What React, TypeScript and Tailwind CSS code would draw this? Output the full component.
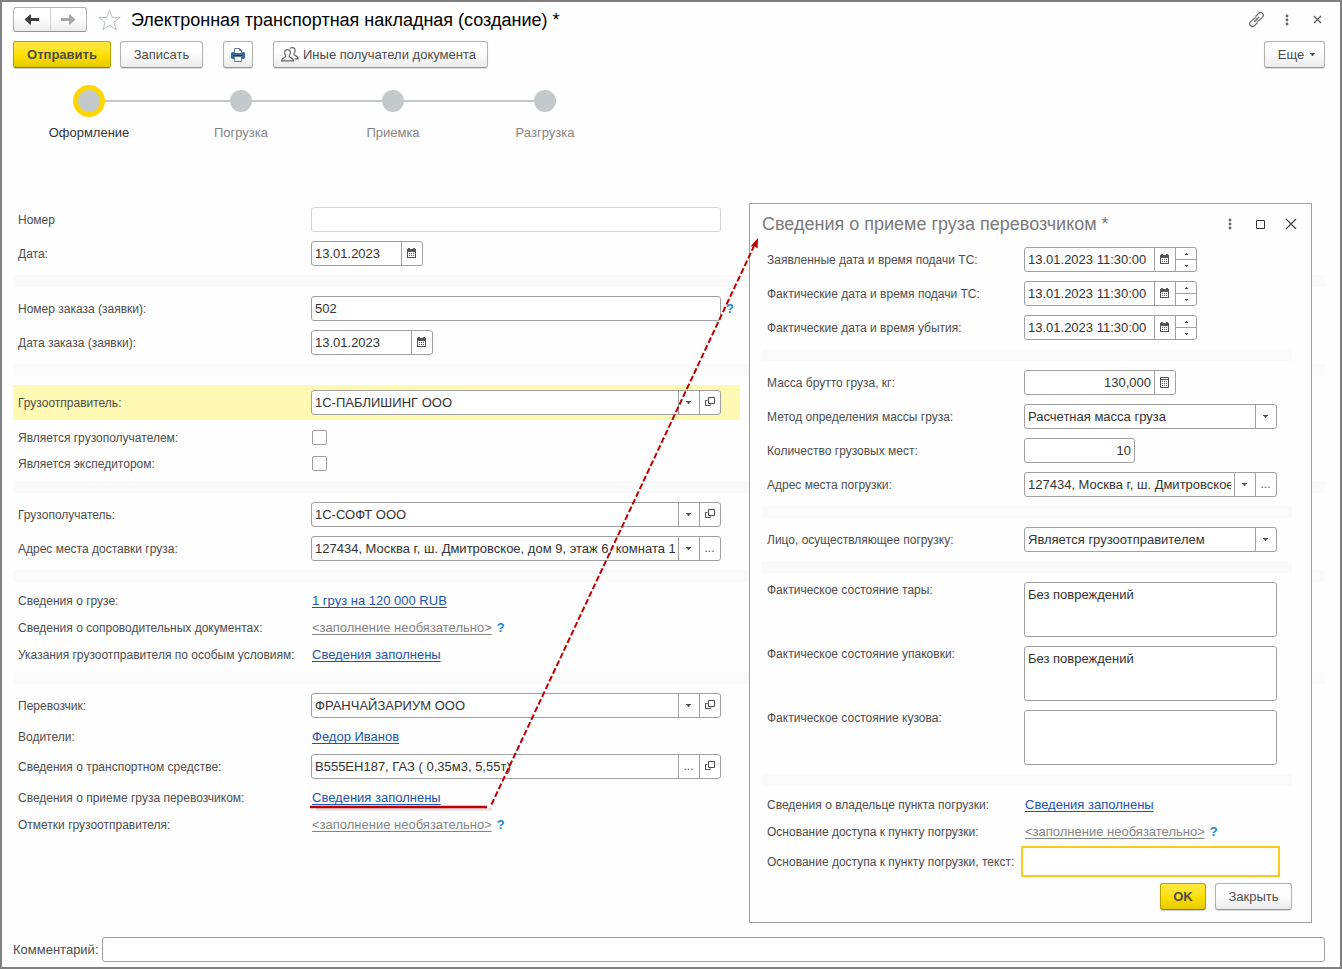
import { useId, type ReactNode } from "react";

const bandClass = "h-3 bg-[#fafafa]";
const buttonClass =
  "flex h-[27px] items-center justify-center rounded-[3px] border border-[#b0b0b0] border-b-[#949494] bg-linear-to-b from-white from-40% to-[#ebebeb] text-[13px] text-[#4d4d4d] shadow-[0_1px_1px_rgba(0,0,0,0.15)]";
const primaryClass =
  "flex h-[27px] items-center justify-center rounded-[3px] border border-[#b3a200] border-b-[#8f8200] bg-linear-to-b from-[#ffe840] via-[#ffe000] to-[#e6cb00] text-[13px] font-bold text-[#4d4d4d] shadow-[0_1px_1px_rgba(0,0,0,0.2)]";

const steps = ["Оформление", "Погрузка", "Приемка", "Разгрузка"];

type Icon = "calendar" | "calc" | "down" | "open" | "dots";

const iconTitles: Record<Icon, string> = {
  calendar: "Выбрать дату",
  calc: "Калькулятор",
  down: "Выбрать из списка",
  open: "Открыть",
  dots: "Выбрать",
};

function FieldIcon({ icon }: { icon: Icon }) {
  if (icon === "dots") return <span className="text-xs leading-4">...</span>;
  if (icon === "down") {
    return (
      <svg width="5" height="3" viewBox="0 0 5 3" aria-hidden="true">
        <path d="M0 0h5v1H4L3 3H2L1 1H0z" fill="#4d4d4d" />
      </svg>
    );
  }
  if (icon === "open") {
    return (
      <svg width="10" height="10" viewBox="0 0 10 10" fill="none" stroke="#4d4d4d" aria-hidden="true">
        <path d="M3.5.5h6v6h-6zM2.5 3.5h-2v5h5v-1" />
      </svg>
    );
  }
  if (icon === "calc") {
    return (
      <svg width="9" height="11" viewBox="0 0 9 11" aria-hidden="true">
        <path d="M.5.5h8v10h-8zM1 2.5h7" fill="none" stroke="#4d4d4d" />
        <path d="M2 4h1v1H2zM4 4h1v1H4zM6 4h1v1H6zM2 6h1v1H2zM4 6h1v1H4zM6 6h1v1H6zM2 8h1v1H2zM4 8h1v1H4zM6 8h1v1H6z" fill="#4d4d4d" />
      </svg>
    );
  }
  return (
    <svg width="9" height="10" viewBox="0 0 9 10" shapeRendering="crispEdges" aria-hidden="true">
      <path d="M1 0h2v1h3V0h2v1h1v9H0V1h1z" fill="#555" />
      <path d="M1 4h7v5H1z" fill="#fff" />
      <path d="M2 5h1v1H2zM4 5h1v1H4zM6 5h1v1H6zM2 7h1v1H2zM4 7h1v1H4zM6 7h1v1H6z" fill="#555" />
    </svg>
  );
}

function Row({ label, id, dialog, children }: { label: string; id?: string; dialog?: boolean; children: ReactNode }) {
  return (
    <div className="flex items-center">
      <label htmlFor={id} className={`shrink-0 pl-[5px] whitespace-nowrap text-[#4d4d4d] ${dialog ? "w-[262px]" : "w-[298px]"}`}>
        {label}
      </label>
      {children}
    </div>
  );
}

type FieldProps = {
  label: string;
  value: string;
  width: string;
  icons?: Icon[];
  dialog?: boolean;
  spinner?: boolean;
  align?: string;
  help?: boolean;
  readOnly?: boolean;
};

function Field({ label, value, width, icons = [], dialog, spinner, align = "", help, readOnly }: FieldProps) {
  const id = useId();
  return (
    <Row label={label} id={id} dialog={dialog}>
      <div className={`flex h-[25px] overflow-hidden rounded-[3px] border bg-white ${readOnly ? "border-[#d5d5d5]" : "border-[#a0a0a0]"} ${width}`}>
        <input id={id} defaultValue={value} readOnly={readOnly} className={`min-w-0 flex-1 px-[3px] text-[13px] text-[#333] outline-none ${align}`} />
        {icons.map((icon) => (
          <button key={icon} type="button" aria-label={iconTitles[icon]} className="flex w-[21px] shrink-0 items-center justify-center border-l border-[#a0a0a0] pr-px pb-px text-[#4d4d4d]">
            <FieldIcon icon={icon} />
          </button>
        ))}
        {spinner && (
          <div className="flex w-[21px] shrink-0 flex-col border-l border-[#a0a0a0]">
            <button type="button" aria-label="Увеличить" className="flex flex-1 items-center justify-center border-b border-[#a0a0a0]">
              <svg width="3" height="2" viewBox="0 0 3 2" aria-hidden="true"><path d="M1 0h1v1h1v1H0V1h1z" fill="#4d4d4d" /></svg>
            </button>
            <button type="button" aria-label="Уменьшить" className="flex flex-1 items-center justify-center">
              <svg width="3" height="2" viewBox="0 0 3 2" aria-hidden="true"><path d="M0 0h3v1H2v1H1V1H0z" fill="#4d4d4d" /></svg>
            </button>
          </div>
        )}
      </div>
      {help && <Help />}
    </Row>
  );
}

function SelectField({ label, value }: { label: string; value: string }) {
  const id = useId();
  return (
    <Row label={label} id={id} dialog>
      <div className="grid h-[25px] w-[253px] grid-cols-[1fr_21px] overflow-hidden rounded-[3px] border border-[#a0a0a0] bg-white">
        <select id={id} className="col-span-2 col-start-1 row-start-1 appearance-none px-[3px] text-[13px] text-[#333] outline-none">
          <option>{value}</option>
        </select>
        <span className="pointer-events-none col-start-2 row-start-1 flex items-center justify-center border-l border-[#a0a0a0] pr-px pb-px">
          <FieldIcon icon="down" />
        </span>
      </div>
    </Row>
  );
}

function AreaField({ label, value }: { label: string; value: string }) {
  const id = useId();
  return (
    <div className="flex items-start">
      <label htmlFor={id} className="w-[262px] shrink-0 pl-[5px] leading-4 text-[#4d4d4d]">{label}</label>
      <textarea id={id} defaultValue={value} className="h-[55px] w-[253px] resize-none rounded-[3px] border border-[#a0a0a0] bg-white px-[3px] py-1 text-[13px] leading-4 text-[#333] outline-none" />
    </div>
  );
}

function CheckField({ label }: { label: string }) {
  const id = useId();
  return (
    <Row label={label} id={id}>
      <div className="flex h-[17px] items-center pl-px">
        <input id={id} type="checkbox" className="size-[15px] appearance-none rounded-[2px] border border-[#a0a0a0] bg-white" />
      </div>
    </Row>
  );
}

function LinkField({ label, text, dialog, optional }: { label: string; text?: string; dialog?: boolean; optional?: boolean }) {
  return (
    <div className="flex h-[18px] items-center pt-0.5">
      <span className={`shrink-0 pl-[5px] whitespace-nowrap text-[#4d4d4d] ${dialog ? "w-[263px]" : "w-[299px]"}`}>{label}</span>
      <a href="#" className={`text-[13px] underline underline-offset-2 ${optional ? "text-[#858585]" : "text-[#1a55b0]"}`}>
        {optional ? "<заполнение необязательно>" : text}
      </a>
      {optional && <Help />}
    </div>
  );
}

function Help() {
  return <button type="button" aria-label="Справка" className="ml-[5px] text-[13px] leading-4 font-bold text-[#1b87cc]">?</button>;
}

function KebabIcon() {
  return (
    <svg width="4" height="12" viewBox="0 0 4 12" fill="#666" aria-hidden="true">
      <circle cx="2" cy="2" r="1.4" />
      <circle cx="2" cy="6" r="1.4" />
      <circle cx="2" cy="10" r="1.4" />
    </svg>
  );
}

function Header() {
  return (
    <header>
      <div className="flex h-[25px] items-center">
        <div className="flex h-[25px] w-[74px] rounded-[3px] border border-[#b0b0b0] border-b-[#949494] bg-linear-to-b from-white from-40% to-[#ebebeb]">
          <button type="button" aria-label="Назад" className="flex flex-1 items-center justify-center border-r border-[#d0d0d0]">
            <svg width="14" height="11" viewBox="0 0 14 11" fill="#404040" aria-hidden="true"><path d="M14 4v3H6v3.500H5L0 6V5L5 .5h1V4z" /></svg>
          </button>
          <button type="button" aria-label="Вперед" className="flex flex-1 items-center justify-center">
            <svg width="14" height="11" viewBox="0 0 14 11" fill="#a8a8a8" aria-hidden="true"><path d="M0 4v3h8v3.500h1L14 6V5L9 .5H8V4z" /></svg>
          </button>
        </div>
        <button type="button" aria-label="В избранное" className="ml-[11px]">
          <svg width="23" height="22" viewBox="0 0 23 22" fill="#fff" stroke="#b5bcc4" aria-hidden="true">
            <path d="m11.5 1 2.7 7.3 8 .2-6.3 4.8 2.3 7.5-6.7-4.5-6.7 4.5 2.3-7.5L.8 8.5l8-.2z" />
          </svg>
        </button>
        <h1 className="ml-[10px] text-lg leading-6 text-black">Электронная транспортная накладная (создание) *</h1>
        <div className="ml-auto flex items-center">
          <button type="button" aria-label="Получить ссылку">
            <svg width="17" height="17" viewBox="0 0 17 17" fill="none" stroke="#666" strokeWidth="1.2" aria-hidden="true">
              <path d="M7.5 5.500 10.500 2.300a2.700 2.700 0 0 1 4 3.800l-3.300 3.300a2.700 2.700 0 0 1-2.500.8M9.500 11.500 6.500 14.700a2.700 2.700 0 0 1-4-3.800l3.300-3.300a2.700 2.700 0 0 1 2.500-.8M6 11l5-5" />
            </svg>
          </button>
          <button type="button" aria-label="Меню" className="ml-5"><KebabIcon /></button>
          <button type="button" aria-label="Закрыть форму" className="mr-[3px] ml-6">
            <svg width="9" height="9" viewBox="0 0 9 9" stroke="#555" strokeWidth="1.2" aria-hidden="true"><path d="m1 1 7 7M8 1 1 8" /></svg>
          </button>
        </div>
      </div>

      <div className="mt-[9px] flex">
        <button type="button" className={`${primaryClass} w-[98px]`}>Отправить</button>
        <button type="button" className={`${buttonClass} ml-[9px] w-[83px]`}>Записать</button>
        <button type="button" aria-label="Печать" className={`${buttonClass} ml-5 w-[30px]`}>
          <svg width="14" height="14" viewBox="0 0 14 14" aria-hidden="true">
            <path d="M3.500 5V.5h5l2 2V5" fill="#fff" stroke="#5b7a9a" />
            <path d="M8.500.5v2h2" fill="none" stroke="#5b7a9a" />
            <path d="M1 4h2v1h8V4h2l1 1v5l-1 1H1l-1-1V5z" fill="#3d6c9a" />
            <path d="M2 7.500h10" stroke="#1c3f63" />
            <path d="M3.500 8.500h7v5h-7z" fill="#fff" stroke="#5b7a9a" />
          </svg>
        </button>
        <button type="button" className={`${buttonClass} ml-5 w-[215px] gap-1 pr-1`}>
          <svg width="18" height="15" viewBox="0 0 18 15" fill="none" stroke="#666" strokeWidth="1.2" aria-hidden="true">
            <path d="M6.500 2.600c2 0 2.900 1.300 2.900 3 0 1.400-.5 2.300-1.200 3-.3 1 .2 1.400 1.200 1.900 1.900.8 3.100 1.200 3.100 3.400H.6c0-2.200 1.100-2.600 3-3.400 1-.5 1.500-.9 1.200-1.900-.7-.7-1.200-1.600-1.200-3 0-1.700.9-3 2.900-3z" />
            <path d="M9 1.600C9.500 1 10.200.6 11.200.6c2 0 2.900 1.300 2.900 3 0 1.400-.5 2.300-1.100 3-.3 1 .1 1.400 1.100 1.900 1.900.8 3 1.200 3 3.400h-3.500" />
          </svg>
          Иные получатели документа
        </button>
        <button type="button" className={`${buttonClass} ml-auto w-[61px] gap-[6px] pl-1`}>
          Еще
          <FieldIcon icon="down" />
        </button>
      </div>

      <ol className="mt-[17px] flex">
        {steps.map((step, index) => (
          <li key={step} className="w-[152px]">
            <div className="flex h-8 items-center">
              <span className={`h-0.5 flex-1 ${index === 0 ? "" : "bg-[#c3c9cb]"}`} />
              <span className={`rounded-full bg-[#c3c9cb] ${index === 0 ? "size-8 border-5 border-[#ffd500]" : "size-[22px]"}`} />
              <span className={`h-0.5 flex-1 ${index === steps.length - 1 ? "" : "bg-[#c3c9cb]"}`} />
            </div>
            <p className={`mt-2 text-center text-[13px] leading-4 ${index === 0 ? "text-[#333]" : "text-[#858585]"}`}>{step}</p>
          </li>
        ))}
      </ol>
    </header>
  );
}

function CargoDialog() {
  const noteId = useId();
  return (
    <section role="dialog" aria-labelledby="cargo-title" className="absolute top-[201px] left-[747px] w-[563px] border border-[#a0a0a0] bg-[#fefefe] pr-[19px] pb-3 pl-3 text-xs">
      <div className="flex h-10 items-center">
        <h2 id="cargo-title" className="text-lg leading-6 text-[#7a7a7a]">Сведения о приеме груза перевозчиком *</h2>
        <button type="button" aria-label="Меню окна" className="ml-auto"><KebabIcon /></button>
        <button type="button" aria-label="Развернуть" className="ml-6">
          <svg width="9" height="9" viewBox="0 0 9 9" fill="none" stroke="#333" aria-hidden="true"><path d="M.5.5h8v8h-8z" /></svg>
        </button>
        <button type="button" aria-label="Закрыть окно" className="-mr-[5px] ml-5">
          <svg width="12" height="12" viewBox="0 0 12 12" stroke="#444" strokeWidth="1.2" aria-hidden="true"><path d="m1 1 10 10M11 1 1 11" /></svg>
        </button>
      </div>
      <div className="mt-[3px] flex flex-col gap-[9px]">
        <Field dialog label="Заявленные дата и время подачи ТС:" value="13.01.2023 11:30:00" width="w-[173px]" icons={["calendar"]} spinner />
        <Field dialog label="Фактические дата и время подачи ТС:" value="13.01.2023 11:30:00" width="w-[173px]" icons={["calendar"]} spinner />
        <Field dialog label="Фактические дата и время убытия:" value="13.01.2023 11:30:00" width="w-[173px]" icons={["calendar"]} spinner />
        <div className={bandClass} />
        <Field dialog label="Масса брутто груза, кг:" value="130,000" width="w-[152px]" icons={["calc"]} align="text-right" />
        <SelectField label="Метод определения массы груза:" value="Расчетная масса груза" />
        <Field dialog label="Количество грузовых мест:" value="10" width="w-[111px]" align="text-right" />
        <Field dialog label="Адрес места погрузки:" value="127434, Москва г, ш. Дмитровское, дом 9" width="w-[253px]" icons={["down", "dots"]} />
        <div className={bandClass} />
        <SelectField label="Лицо, осуществляющее погрузку:" value="Является грузоотправителем" />
        <div className={bandClass} />
        <AreaField label="Фактическое состояние тары:" value="Без повреждений" />
        <AreaField label="Фактическое состояние упаковки:" value="Без повреждений" />
        <AreaField label="Фактическое состояние кузова:" value="" />
        <div className={bandClass} />
        <LinkField dialog label="Сведения о владельце пункта погрузки:" text="Сведения заполнены" />
        <LinkField dialog label="Основание доступа к пункту погрузки:" optional />
        <Row dialog label="Основание доступа к пункту погрузки, текст:" id={noteId}>
          <input id={noteId} className="h-[25px] w-[253px] bg-white px-1 text-[13px] text-[#333] outline-2 outline-offset-1 outline-[#fcc91f]" />
        </Row>
        <div className="flex justify-end gap-[9px]">
          <button type="button" className={`${primaryClass} w-[46px]`}>OK</button>
          <button type="button" className={`${buttonClass} w-[77px]`}>Закрыть</button>
        </div>
      </div>
    </section>
  );
}

// Red underline and dashed arrow that tie the link to its window
function Callout() {
  return (
    <svg className="pointer-events-none absolute top-[230px] left-[300px]" width="470" height="590" viewBox="302 232 470 590" aria-hidden="true">
      <path d="M316 809h176" stroke="#000" strokeOpacity=".12" strokeWidth="3" />
      <path d="M310 807h177" stroke="#c00000" strokeWidth="2.5" />
      <path d="M491.500 804.500 754 246" stroke="#c00000" strokeWidth="2" strokeDasharray="6 2.5" />
      <path d="m758 238-.3 10.500-3-2.200-4.200.2z" fill="#c00000" />
    </svg>
  );
}

export default function App() {
  return (
    <div className="relative flex min-h-screen flex-col border-2 border-[#808080] bg-[#fefefe] pt-[5px] pr-[15px] pb-[5px] pl-[11px] font-['Liberation_Sans',Arial,sans-serif] text-xs">
      <Header />
      <main className="mt-[66px] flex flex-col gap-[9px]">
        <Field label="Номер" value="" width="w-[410px]" readOnly />
        <Field label="Дата:" value="13.01.2023" width="w-[112px]" icons={["calendar"]} />
        <div className={bandClass} />
        <Field label="Номер заказа (заявки):" value="502" width="w-[410px]" help />
        <Field label="Дата заказа (заявки):" value="13.01.2023" width="w-[122px]" icons={["calendar"]} />
        <div className={bandClass} />
        <div className="w-[727px] bg-[#fff9b3] py-[5px]">
          <Field label="Грузоотправитель:" value="1С-ПАБЛИШИНГ ООО" width="w-[410px]" icons={["down", "open"]} />
        </div>
        <CheckField label="Является грузополучателем:" />
        <CheckField label="Является экспедитором:" />
        <div className={bandClass} />
        <Field label="Грузополучатель:" value="1С-СОФТ ООО" width="w-[410px]" icons={["down", "open"]} />
        <Field label="Адрес места доставки груза:" value="127434, Москва г, ш. Дмитровское, дом 9, этаж 6, комната 11" width="w-[410px]" icons={["down", "dots"]} />
        <div className={bandClass} />
        <LinkField label="Сведения о грузе:" text="1 груз на 120 000 RUB" />
        <LinkField label="Сведения о сопроводительных документах:" optional />
        <LinkField label="Указания грузоотправителя по особым условиям:" text="Сведения заполнены" />
        <div className={bandClass} />
        <Field label="Перевозчик:" value="ФРАНЧАЙЗАРИУМ ООО" width="w-[410px]" icons={["down", "open"]} />
        <LinkField label="Водители:" text="Федор Иванов" />
        <Field label="Сведения о транспортном средстве:" value="В555ЕН187, ГАЗ ( 0,35м3, 5,55т)" width="w-[410px]" icons={["dots", "open"]} />
        <LinkField label="Сведения о приеме груза перевозчиком:" text="Сведения заполнены" />
        <LinkField label="Отметки грузоотправителя:" optional />
      </main>
      <footer className="mt-auto flex items-center">
        <label htmlFor="comment" className="w-[89px] shrink-0 text-[13px] text-[#4d4d4d]">Комментарий:</label>
        <input id="comment" className="h-[25px] min-w-0 flex-1 rounded-[3px] border border-[#a0a0a0] bg-white px-1 text-[13px] text-[#333]" />
      </footer>
      <CargoDialog />
      <Callout />
    </div>
  );
}
